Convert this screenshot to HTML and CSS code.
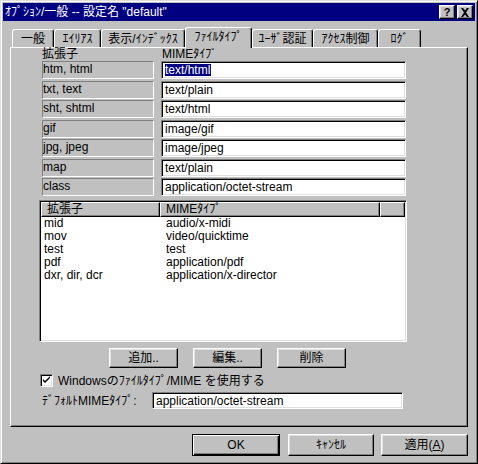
FILE: index.html
```html
<!DOCTYPE html>
<html lang="ja">
<head>
<meta charset="utf-8">
<title>オプション</title>
<link rel="stylesheet" href="styles.css">
</head>
<body>
<div class="window">
  <div class="titlebar">
    <span class="title">ｵﾌﾟｼｮﾝ/一般 -- 設定名 "default"</span>
    <div class="tbtns">
      <span class="tbtn help">?</span>
      <span class="tbtn close"><svg width="10" height="9" viewBox="0 0 10 9"><path d="M1 0h2l2 2.5L7 0h2L6 4.5 9 9H7L5 6.5 3 9H1l3-4.5z" fill="#000"/></svg></span>
    </div>
  </div>
  <div class="body">
    <div class="tabs">
      <div class="tab t1">一般</div>
      <div class="tab t2">ｴｲﾘｱｽ</div>
      <div class="tab t3">表示/ｲﾝﾃﾞｯｸｽ</div>
      <div class="tab t4 active">ﾌｧｲﾙﾀｲﾌﾟ</div>
      <div class="tab t5">ﾕｰｻﾞ認証</div>
      <div class="tab t6">ｱｸｾｽ制御</div>
      <div class="tab t7">ﾛｸﾞ</div>
    </div>
    <div class="panel">
      <div class="grid hdr"><span>拡張子</span><span class="mimehdr">MIMEﾀｲﾌﾟ</span></div>
      <div class="grid rows">
        <div class="lbl">htm, html</div><div class="field"><span class="sel">text/html</span></div>
        <div class="lbl">txt, text</div><div class="field">text/plain</div>
        <div class="lbl">sht, shtml</div><div class="field">text/html</div>
        <div class="lbl">gif</div><div class="field">image/gif</div>
        <div class="lbl">jpg, jpeg</div><div class="field">image/jpeg</div>
        <div class="lbl">map</div><div class="field">text/plain</div>
        <div class="lbl">class</div><div class="field">application/octet-stream</div>
      </div>
      <div class="listview">
        <div class="lvhead">
          <div class="hcol h1">拡張子</div>
          <div class="hcol h2">MIMEﾀｲﾌﾟ</div>
          <div class="hcol h3"></div>
        </div>
        <div class="lvrow"><span class="c1">mid</span><span class="c2">audio/x-midi</span></div>
        <div class="lvrow"><span class="c1">mov</span><span class="c2">video/quicktime</span></div>
        <div class="lvrow"><span class="c1">test</span><span class="c2">test</span></div>
        <div class="lvrow"><span class="c1">pdf</span><span class="c2">application/pdf</span></div>
        <div class="lvrow"><span class="c1">dxr, dir, dcr</span><span class="c2">application/x-director</span></div>
      </div>
      <div class="btnrow">
        <button class="btn small">追加..</button>
        <button class="btn small">編集..</button>
        <button class="btn small">削除</button>
      </div>
      <div class="checkrow">
        <span class="checkbox"><svg width="9" height="9" viewBox="0 0 9 9"><path d="M1 3v2l2 2 5-5V0L3 5z" fill="#000"/></svg></span>
        <span class="checklbl">Windowsのﾌｧｲﾙﾀｲﾌﾟ/MIME を使用する</span>
      </div>
      <div class="defrow">
        <span class="deflbl">ﾃﾞﾌｫﾙﾄMIMEﾀｲﾌﾟ:</span>
        <div class="field deffield">application/octet-stream</div>
      </div>
    </div>
    <div class="footer">
      <button class="btn big ok">OK</button>
      <button class="btn big cancel">ｷｬﾝｾﾙ</button>
      <button class="btn big apply">適用(<u>A</u>)</button>
    </div>
  </div>
</div>
</body>
</html>
```
FILE: styles.css
```css
html, body {
  margin: 0;
  padding: 0;
  background: #c0c0c0;
}
body {
  font-family: "Liberation Sans", "Noto Sans CJK JP", sans-serif;
  font-size: 12px;
  line-height: 14px;
  color: #000;
}
.window {
  width: 478px;
  height: 464px;
  box-sizing: border-box;
  border: 1px solid;
  border-color: #dfdfdf #000 #000 #dfdfdf;
  box-shadow: inset 1px 1px #fff, inset -1px -1px #808080;
  padding: 2px;
  background: #c0c0c0;
  overflow: hidden;
}
.titlebar {
  height: 18px;
  background: #000080;
  color: #fff;
  display: flex;
  align-items: center;
  justify-content: space-between;
  padding-left: 2px;
}
.title {
  white-space: nowrap;
  line-height: 14px;
}
.tbtns {
  display: flex;
  gap: 2px;
  margin-right: 2px;
}
.tbtn {
  width: 16px;
  height: 14px;
  box-sizing: border-box;
  background: #c0c0c0;
  border: 1px solid;
  border-color: #fff #000 #000 #fff;
  box-shadow: inset -1px -1px #808080, inset 1px 1px #dfdfdf;
  display: flex;
  align-items: center;
  justify-content: center;
  color: #000;
}
.help {
  font-weight: bold;
  font-size: 11px;
  line-height: 12px;
}
.body {
  padding: 0 7px;
}
.tabs {
  display: flex;
  align-items: flex-end;
  height: 20px;
  margin-top: 6px;
  padding-left: 2px;
}
.tab {
  box-sizing: border-box;
  height: 18px;
  border-left: 1px solid #fff;
  border-top: 1px solid #fff;
  border-right: 1px solid #000;
  box-shadow: inset -1px 0 #808080;
  border-radius: 3px 3px 0 0;
  display: flex;
  align-items: center;
  justify-content: center;
  white-space: nowrap;
  line-height: 14px;
  padding-top: 1px;
}
.tab.active {
  height: 21px;
  margin-bottom: -1px;
  position: relative;
  z-index: 1;
  background: #c0c0c0;
  padding-top: 0;
  padding-bottom: 2px;
}
.t1 { width: 42px; }
.t2 { width: 47px; }
.t3 { width: 84px; }
.t4 { width: 67px; }
.t5 { width: 61px; }
.t6 { width: 65px; }
.t7 { width: 43px; }

.panel {
  box-sizing: border-box;
  height: 380px;
  border: 1px solid;
  border-color: #fff #000 #000 #fff;
  box-shadow: inset -1px -1px #808080;
  padding-left: 28px;
}
.grid {
  display: grid;
  grid-template-columns: 112px 245px;
  column-gap: 7px;
  margin-left: 3px;
}
.hdr {
  height: 13px;
  line-height: 13px;
}
.mimehdr {
  padding-left: 1px;
}
.rows {
  grid-auto-rows: 18px;
  row-gap: 1.5px;
}
.lbl {
  box-sizing: border-box;
  border: 1px solid;
  border-color: #808080 #fff #fff #808080;
  background: #c0c0c0;
  padding-left: 0;
  line-height: 14px;
  white-space: nowrap;
}
.field {
  box-sizing: border-box;
  border: 1px solid;
  border-color: #808080 #fff #fff #808080;
  box-shadow: inset 1px 1px #000, inset -1px -1px #dfdfdf;
  background: #fff;
  padding-left: 3px;
  display: flex;
  align-items: center;
  white-space: nowrap;
  line-height: 14px;
}
.sel {
  background: #000080;
  color: #fff;
  line-height: 12px;
  padding-right: 1px;
}
.listview {
  margin-top: 4px;
  width: 368px;
  height: 142px;
  box-sizing: border-box;
  border: 1px solid;
  border-color: #808080 #fff #fff #808080;
  box-shadow: inset 1px 1px #000, inset -1px -1px #dfdfdf;
  background: #fff;
  padding: 1px;
}
.lvhead {
  display: flex;
  height: 15px;
}
.hcol {
  box-sizing: border-box;
  height: 15px;
  border: 1px solid;
  border-color: #fff #000 #000 #fff;
  box-shadow: inset -1px -1px #808080;
  background: #c0c0c0;
  padding-left: 5px;
  line-height: 13px;
  white-space: nowrap;
}
.h1 { width: 119px; }
.h2 { width: 220px; }
.h3 { flex: 1; }
.lvrow {
  display: grid;
  grid-template-columns: 119px 1fr;
  height: 13px;
  line-height: 13px;
  white-space: nowrap;
}
.c1 { padding-left: 3px; }
.c2 { padding-left: 6px; }

.btn {
  box-sizing: border-box;
  background: #c0c0c0;
  border: 1px solid;
  border-color: #fff #000 #000 #fff;
  box-shadow: inset -1px -1px #808080, inset 1px 1px #dfdfdf;
  font: inherit;
  line-height: 14px;
  color: #000;
  padding: 0;
  margin: 0;
  white-space: nowrap;
}
.btnrow {
  display: flex;
  gap: 15px;
  margin-top: 6px;
  margin-left: 70px;
  height: 20px;
}
.small {
  width: 69px;
  height: 20px;
}
.checkrow {
  display: flex;
  align-items: center;
  height: 15px;
  margin-top: 5px;
  margin-left: 1px;
}
.checkbox {
  width: 13px;
  height: 13px;
  box-sizing: border-box;
  border: 1px solid;
  border-color: #808080 #fff #fff #808080;
  box-shadow: inset 1px 1px #000, inset -1px -1px #dfdfdf;
  background: #fff;
  display: flex;
  align-items: center;
  justify-content: center;
}
.checkbox svg {
  display: block;
}
.checklbl {
  margin-left: 5px;
  white-space: nowrap;
}
.defrow {
  display: flex;
  align-items: center;
  height: 17px;
  margin-top: 4px;
  margin-left: 3px;
}
.deflbl {
  width: 110px;
  white-space: nowrap;
}
.deffield {
  width: 251px;
  height: 17px;
}
.footer {
  display: flex;
  justify-content: flex-end;
  margin-top: 7px;
}
.big {
  height: 22px;
}
.ok {
  width: 88px;
  border-color: #000;
  box-shadow: inset 1px 1px #fff, inset -1px -1px #000, inset -2px -2px #808080;
}
.cancel {
  width: 86px;
  margin-left: 8px;
}
.apply {
  width: 87px;
  margin-left: 7px;
}
```
